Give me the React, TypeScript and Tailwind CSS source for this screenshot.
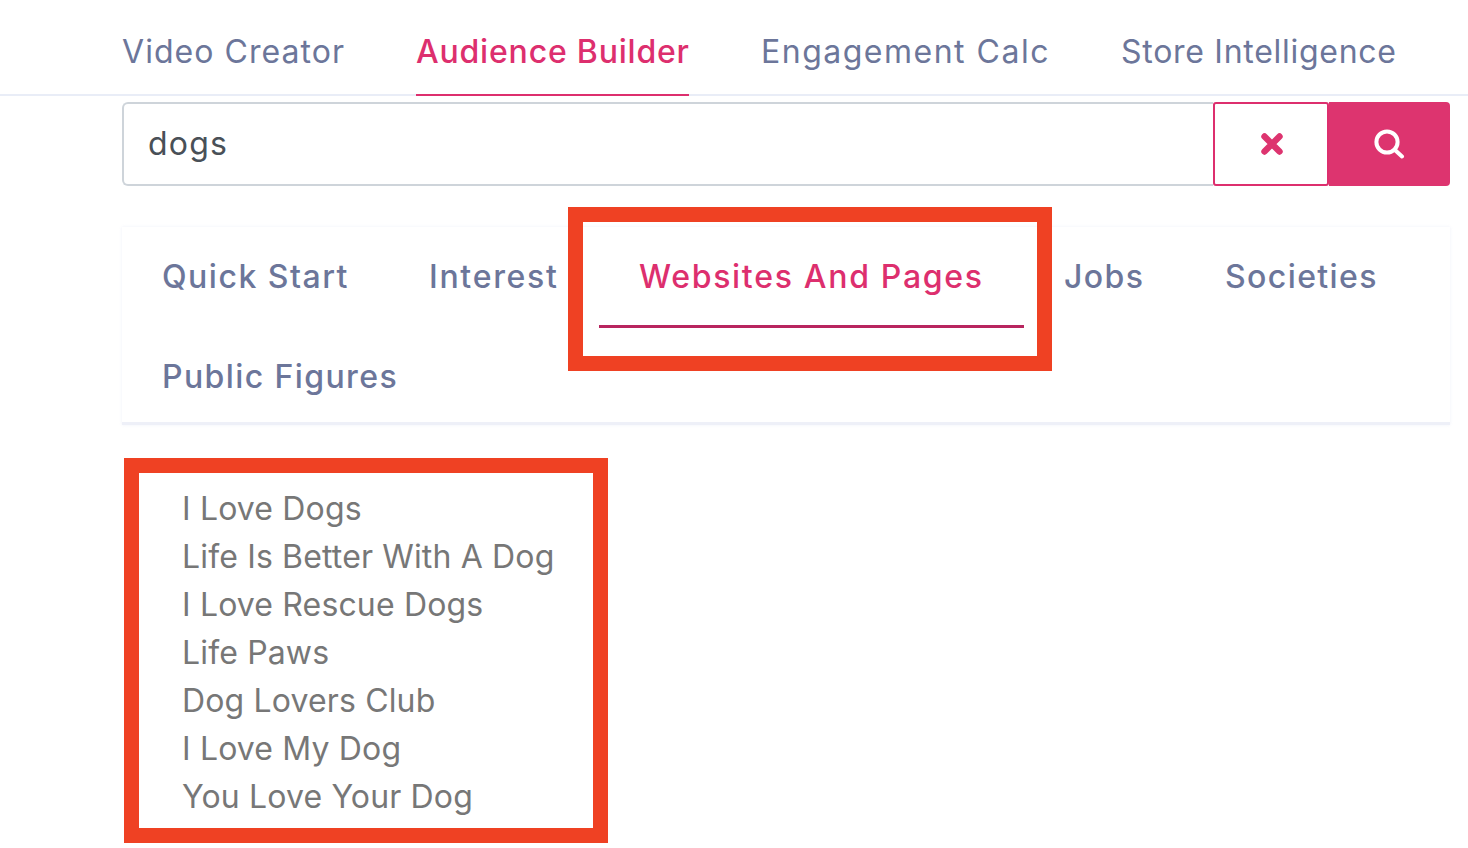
import React from "react";

const nav = [
  { t: "Video Creator", w: "w-[222px]", s: "tracking-[1.05px]", a: false },
  { t: "Audience Builder", w: "w-[273px]", s: "tracking-[0.8px]", a: true },
  { t: "Engagement Calc", w: "w-[288px]", s: "tracking-[1.5px]", a: false },
  { t: "Store Intelligence", w: "w-[275px]", s: "tracking-[0.72px]", a: false },
];
const tabs = [
  { t: "Quick Start", w: "w-[267px]", s: "tracking-[1.5px]" },
  { t: "Interest", w: "w-[210px]", s: "tracking-[1.7px]" },
  { t: "Websites And Pages", w: "w-[425px]", s: "tracking-[1.7px]", a: true },
  { t: "Jobs", w: "w-[161px]", s: "tracking-[1.4px]" },
  { t: "Societies", w: "w-[232px]", s: "tracking-[1.4px]" },
  { t: "Public Figures", w: "w-[315px]", s: "tracking-[1.4px]" },
];
const items = ["I Love Dogs", "Life Is Better With A Dog", "I Love Rescue Dogs", "Life Paws", "Dog Lovers Club", "I Love My Dog", "You Love Your Dog"];

export default function App() {
  return (
    <div className="w-[1468px] h-[848px] overflow-hidden bg-white font-['Inter','Liberation_Sans',sans-serif]">
      <div className="h-[96px] border-b-2 border-[#e9edf7] pl-[122px] flex gap-[72px]">
        {nav.map((n) => (
          <div key={n.t} className={`${n.w} ${n.s} h-[96px] whitespace-nowrap pt-[29px] leading-[46px] text-[32px] ${n.a ? "text-[#dd2f6e] font-medium border-b-2 border-[#dd2f6e]" : "text-[#6c769a]"}`}>{n.t}</div>
        ))}
      </div>
      <div className="ml-[122px] mt-[6px] w-[1328px] h-[84px] flex">
        <input readOnly value="dogs" className="flex-1 min-w-0 h-full pl-[24px] pb-[2px] border-2 border-r-0 border-[#ced4da] rounded-l-[6px] text-[32px] tracking-[1.2px] text-[#495057] outline-none font-['Inter',sans-serif]" />
        <button className="w-[116px] h-full border-2 border-[#dd2f6e] rounded-[3px] bg-white flex items-center justify-center">
          <svg width="24" height="24" viewBox="0 0 24 24" fill="none" stroke="#dd346f" strokeWidth="6.4" strokeLinecap="round" className="ml-[2px]">
            <path d="M4.5 4.5L19.5 19.5M19.5 4.5L4.5 19.5" />
          </svg>
        </button>
        <button className="w-[121px] h-full bg-[#dd346f] rounded-r-[4px] flex items-center justify-center">
          <svg width="31" height="30" viewBox="0 0 31 30" fill="none" stroke="#fff" strokeWidth="4" strokeLinecap="round">
            <circle cx="13" cy="13" r="10.6" />
            <path d="M21.5 21.5L28 27.5" />
          </svg>
        </button>
      </div>
      <div className="ml-[122px] mt-[41px] w-[1328px] h-[198px] flex flex-wrap content-start bg-white border-b-[3px] border-[#eef0f8] shadow-[0_0_3px_rgba(230,233,245,0.6)]">
        {tabs.map((t) => (
          <div key={t.t} className={`${t.w} ${t.s} relative h-[100px] pl-[40px] whitespace-nowrap text-[32px] font-medium leading-[100px] ${t.a ? "text-[#dd2f6e]" : "text-[#6c769a]"}`}>
            {t.t}
            {t.a && (
              <>
                <div className="absolute left-0 right-0 bottom-[-1px] h-[3px] bg-[#b8255f]" />
                <div className="absolute left-[-31px] top-[-20px] w-[484px] h-[164px] border-[15px] border-[#ef4123]" />
              </>
            )}
          </div>
        ))}
      </div>
      <div className="ml-[124px] mt-[33px] w-[484px] h-[385px] border-[15px] border-[#ef4123] pl-[43px] pt-[12px]">
        {items.map((i) => (
          <div key={i} className="h-[48px] leading-[48px] whitespace-nowrap text-[32px] tracking-[0.15px] text-[#777777]">{i}</div>
        ))}
      </div>
    </div>
  );
}
